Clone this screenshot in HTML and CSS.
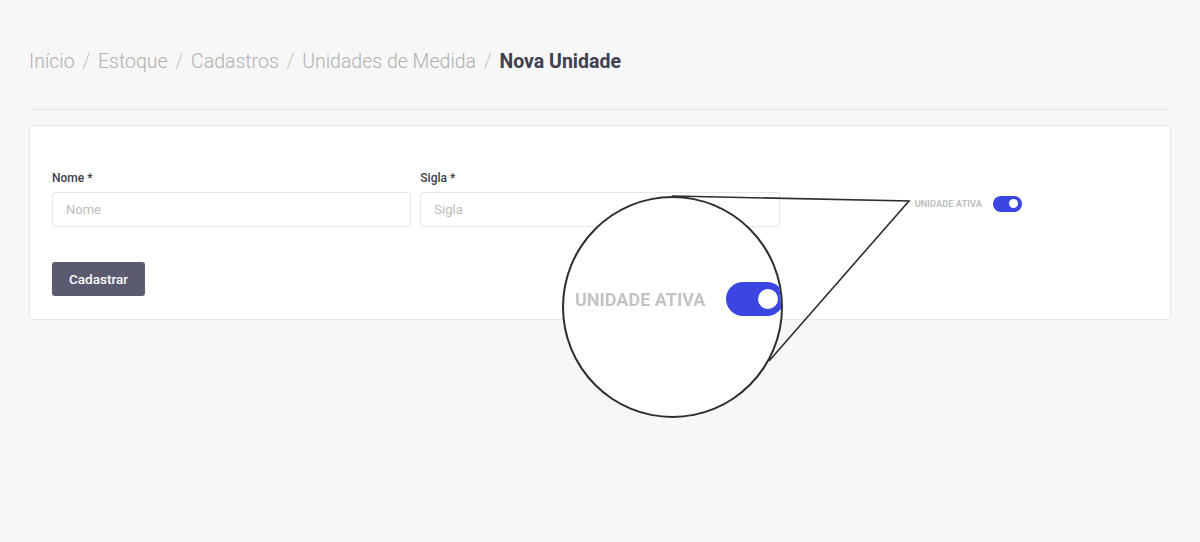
FILE: index.html
```html
<!DOCTYPE html>
<html lang="pt-BR">
<head>
<meta charset="utf-8">
<title>Nova Unidade</title>
<link rel="stylesheet" href="styles.css">
</head>
<body>
<div class="page">
  <nav class="breadcrumb">
    <span class="crumb">Início</span><span class="sep">/</span><span class="crumb">Estoque</span><span class="sep">/</span><span class="crumb">Cadastros</span><span class="sep">/</span><span class="crumb">Unidades de Medida</span><span class="sep">/</span><span class="crumb current">Nova Unidade</span>
  </nav>
  <hr class="divider">
  <section class="card">
    <div class="form-grid">
      <div class="field">
        <label class="label">Nome *</label>
        <input class="input" type="text" placeholder="Nome">
      </div>
      <div class="field">
        <label class="label">Sigla *</label>
        <input class="input" type="text" placeholder="Sigla">
      </div>
      <div class="switch-cell">
        <span class="switch-label">UNIDADE ATIVA</span>
        <span class="switch"><span class="knob"></span></span>
      </div>
    </div>
    <button class="btn" type="button">Cadastrar</button>
  </section>
</div>

<svg class="callout-lines" width="1200" height="542" viewBox="0 0 1200 542">
  <polyline points="672,196 909,201 769,361" fill="none" stroke="#2e2e2e" stroke-width="1.6"/>
</svg>
<div class="magnifier">
  <div class="mag-row">
    <span class="mag-label">UNIDADE ATIVA</span>
    <span class="mag-switch"><span class="mag-knob"></span></span>
  </div>
</div>
</body>
</html>
```

FILE: styles.css
```css
* { box-sizing: border-box; }
html, body {
  margin: 0;
  padding: 0;
  background: #f7f7f7;
  font-family: Roboto, "Liberation Sans", Arial, sans-serif;
}
.page {
  padding: 50px 29px 0 29px;
}
.breadcrumb {
  font-size: 19.5px;
  line-height: 24px;
  color: #b0b0b0;
  font-weight: 300;
  white-space: nowrap;
}
.sep {
  margin: 0 7.8px;
  color: #c4c4c4;
}
.crumb.current {
  color: #3f4150;
  font-weight: 700;
}
.divider {
  margin: 35px 0 0 0;
  border: 0;
  border-top: 1px solid #e9e9e9;
  height: 0;
}
.card {
  margin-top: 15px;
  background: #fff;
  border: 1px solid #e8e8e8;
  border-radius: 3px;
  padding: 44px 22px 23px 22px;
}
.form-grid {
  display: grid;
  grid-template-columns: 1fr 1fr 1fr;
  column-gap: 9px;
}
.field {
  display: flex;
  flex-direction: column;
}
.label {
  font-size: 12px;
  line-height: 16px;
  font-weight: 500;
  color: #3d3f4b;
  margin-bottom: 6px;
}
.input {
  height: 35px;
  border: 1px solid #e6e6e6;
  border-radius: 3px;
  padding: 0 13px;
  font-family: inherit;
  font-size: 13px;
  color: #333;
  background: #fff;
  outline: none;
}
.input::placeholder { color: #bdbdbd; }
.switch-cell {
  display: flex;
  justify-content: center;
  align-items: center;
  gap: 11px;
  margin-top: 25px;
  height: 17px;
}
.switch-label {
  font-size: 9.3px;
  font-weight: 700;
  color: #c0c0c0;
}
.switch {
  width: 29px;
  height: 16px;
  border-radius: 8px;
  background: #3b45e2;
  display: flex;
  align-items: center;
  justify-content: flex-end;
  padding-right: 4px;
}
.knob {
  width: 9px;
  height: 9px;
  border-radius: 50%;
  background: #fff;
}
.btn {
  margin-top: 35px;
  height: 34px;
  padding: 0 17px;
  background: #5a5a70;
  color: #fff;
  border: 0;
  border-radius: 3px;
  font-family: inherit;
  font-size: 13.5px;
  font-weight: 500;
}
.callout-lines {
  position: absolute;
  left: 0;
  top: 0;
  pointer-events: none;
}
.magnifier {
  position: absolute;
  left: 562px;
  top: 196px;
  width: 221px;
  height: 222px;
  border: 2px solid #2e2e2e;
  border-radius: 50%;
  background: #fff;
  overflow: hidden;
  padding: 84px 0 0 11px;
}
.mag-row {
  display: flex;
  align-items: center;
  gap: 21px;
  height: 34px;
  white-space: nowrap;
}
.mag-label {
  font-size: 18px;
  font-weight: 700;
  color: #c4c4c4;
  filter: blur(0.6px);
}
.mag-switch {
  flex: none;
  width: 58px;
  height: 34px;
  border-radius: 17px;
  background: #3b45e2;
  display: flex;
  align-items: center;
  justify-content: flex-end;
  padding-right: 6px;
}
.mag-knob {
  width: 20px;
  height: 20px;
  border-radius: 50%;
  background: #fff;
}
```
